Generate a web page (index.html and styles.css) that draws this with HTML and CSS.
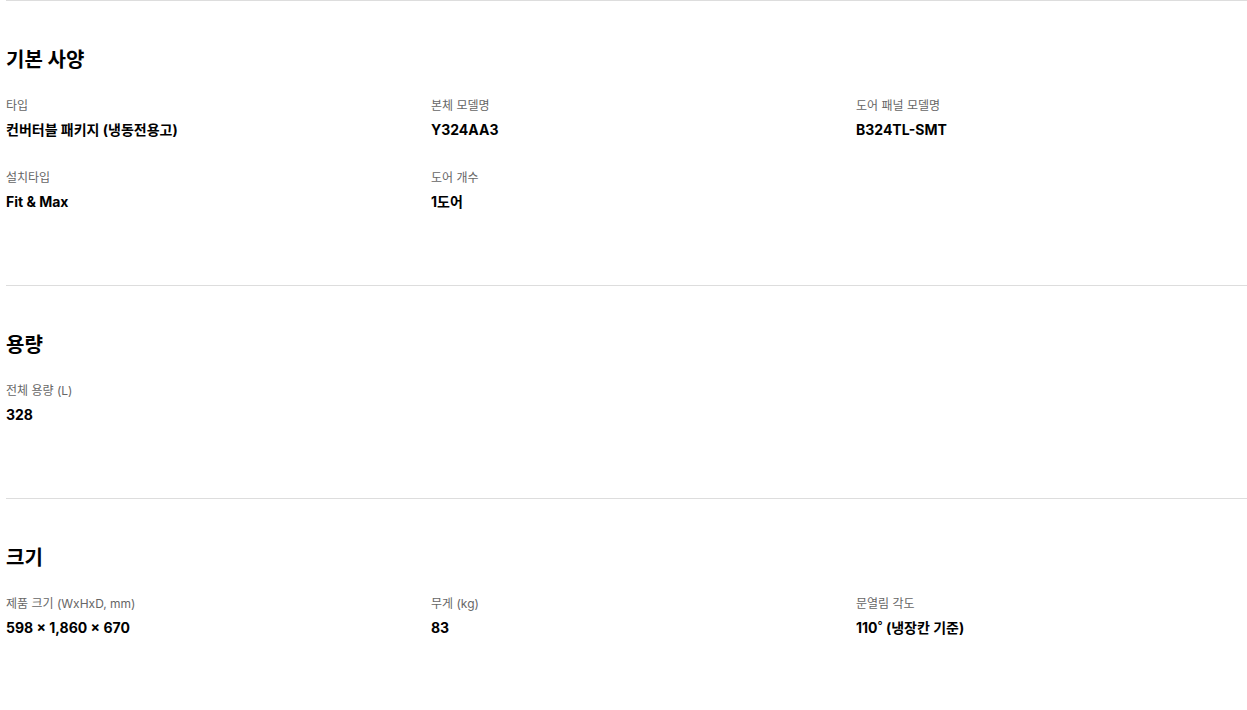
FILE: index.html
```html
<!DOCTYPE html>
<html lang="ko">
<head>
    <meta charset="UTF-8">
    <meta name="viewport" content="width=device-width, initial-scale=1.0">
    <title>제품 사양</title>
    <link rel="stylesheet" href="styles.css">
</head>
<body>
    <div class="spec">
        <section class="spec-section">
            <h2>기본 사양</h2>
            <dl class="spec-grid">
                <div class="spec-item">
                    <dt>타입</dt>
                    <dd>컨버터블 패키지 (냉동전용고)</dd>
                </div>
                <div class="spec-item">
                    <dt>본체 모델명</dt>
                    <dd>Y324AA3</dd>
                </div>
                <div class="spec-item">
                    <dt>도어 패널 모델명</dt>
                    <dd>B324TL-SMT</dd>
                </div>
                <div class="spec-item">
                    <dt>설치타입</dt>
                    <dd>Fit &amp; Max</dd>
                </div>
                <div class="spec-item">
                    <dt>도어 개수</dt>
                    <dd>1도어</dd>
                </div>
            </dl>
        </section>

        <section class="spec-section">
            <h2>용량</h2>
            <dl class="spec-grid">
                <div class="spec-item">
                    <dt>전체 용량 (L)</dt>
                    <dd>328</dd>
                </div>
            </dl>
        </section>

        <section class="spec-section">
            <h2>크기</h2>
            <dl class="spec-grid">
                <div class="spec-item">
                    <dt>제품 크기 (WxHxD, mm)</dt>
                    <dd>598 × 1,860 × 670</dd>
                </div>
                <div class="spec-item">
                    <dt>무게 (kg)</dt>
                    <dd>83</dd>
                </div>
                <div class="spec-item">
                    <dt>문열림 각도</dt>
                    <dd>110˚ (냉장칸 기준)</dd>
                </div>
            </dl>
        </section>
    </div>
</body>
</html>
```

FILE: styles.css
```css
body {
    margin: 0;
    padding: 0 0 0 6px;
    font-family: Inter, "Noto Sans CJK KR", sans-serif;
    color: #000;
    background-color: #fff;
}
.spec-section {
    border-top: 1px solid #dddddd;
    padding: 45px 0 73px;
}
.spec-section h2 {
    margin: 0 0 23px;
    font-size: 20px;
    line-height: 28px;
    font-weight: 700;
}
.spec-grid {
    display: grid;
    grid-template-columns: repeat(3, 1fr);
    column-gap: 34px;
    row-gap: 29px;
    margin: 0;
}
.spec-item dt {
    margin-bottom: 5px;
    font-size: 12px;
    line-height: 18px;
    color: #666;
}
.spec-item dd {
    margin: 0;
    font-size: 14px;
    line-height: 20px;
    font-weight: 700;
}
```
